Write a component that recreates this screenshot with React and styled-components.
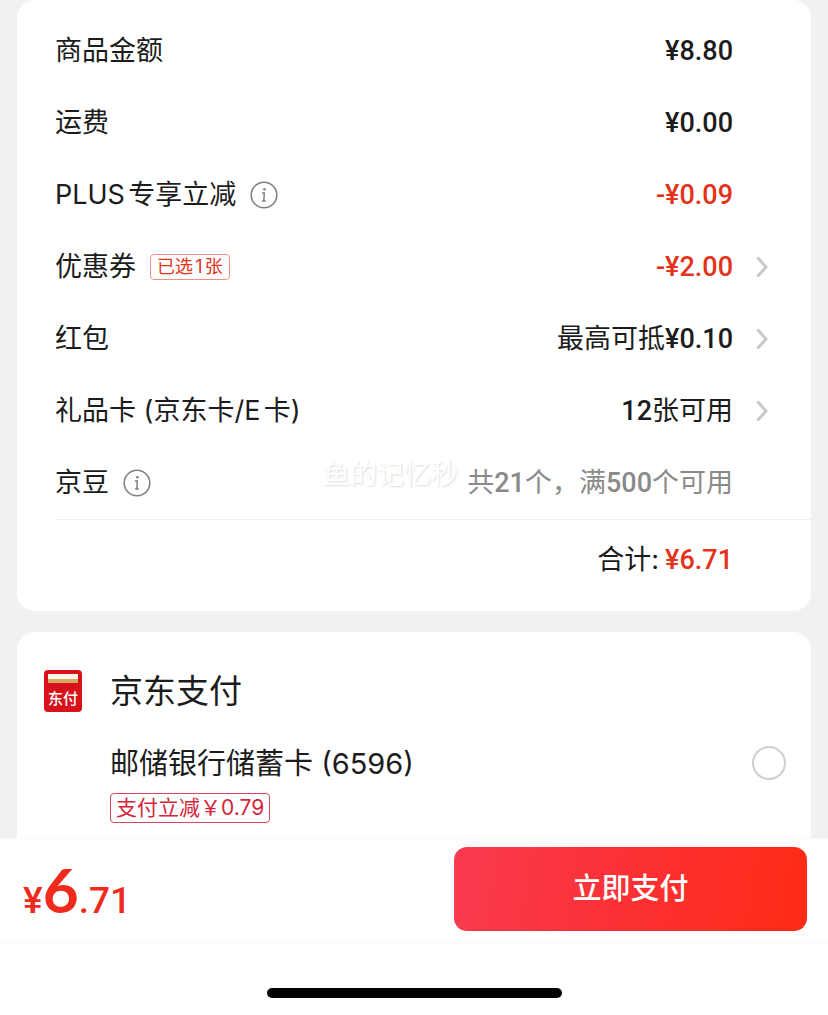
import { useState } from "react";
import styled, { createGlobalStyle } from "styled-components";

const GlobalStyle = createGlobalStyle`
  * {
    box-sizing: border-box;
  }

  body {
    margin: 0;
    background-color: #f1f1f1;
    color: #1c1c1c;
    font-family: Inter, "Noto Sans CJK SC", sans-serif;
    font-size: 27px;
    line-height: 40px;
    text-autospace: no-autospace;
    text-spacing-trim: space-all;
  }

  button {
    font: inherit;
    color: inherit;
    border: none;
    background: none;
    padding: 0;
    cursor: pointer;
  }
`;

const Page = styled.div`
  display: flex;
  flex-direction: column;
  min-height: 100vh;
`;

const Content = styled.main`
  flex: 1;
  display: flex;
  flex-direction: column;
  gap: 21px;
  padding: 0 17px;
`;

const SummaryCard = styled.section`
  position: relative;
  padding: 15px 0 12px;
  background-color: white;
  border-radius: 18px;
`;

const RowList = styled.ul`
  list-style: none;
  margin: 0;
  padding: 0;
`;

const Row = styled.li`
  display: flex;
  align-items: center;
  height: 72px;
  padding: 0 38px;
`;

const Label = styled.span`
  white-space: nowrap;
  text-autospace: normal;
`;

const Value = styled.span`
  margin-left: auto;
  white-space: nowrap;
  color: ${({ $tone }) =>
    $tone === "red" ? "#e4321b" : $tone === "muted" ? "#8a8a8a" : "inherit"};
`;

const Amount = styled.span`
  color: ${({ $tone }) => ($tone === "red" ? "#e4321b" : "inherit")};
  font-family: Roboto, "Noto Sans CJK SC", sans-serif;
  font-weight: 500;
`;

const ArrowSlot = styled.span`
  display: flex;
  justify-content: flex-end;
  width: 40px;
  padding-right: 4px;
`;

const IconButton = styled.button`
  display: flex;
  margin-left: 14px;
`;

const ArrowButton = styled.button`
  display: flex;
`;

const Tag = styled.span`
  margin-left: 14px;
  padding: 0 6px;
  border: 1px solid #ee8f85;
  border-radius: 4px;
  color: #e4321b;
  font-size: 18px;
  line-height: 24px;
  text-autospace: normal;
`;

const TotalRow = styled.div`
  display: flex;
  align-items: center;
  justify-content: flex-end;
  gap: 6px;
  height: 80px;
  margin-left: 38px;
  padding-right: 78px;
  border-top: 1px solid #efefef;
`;

const Watermark = styled.span`
  position: absolute;
  top: 455px;
  left: 306px;
  color: white;
  text-shadow: 1px 1px 2px rgba(0, 0, 0, 0.14);
  pointer-events: none;
`;

const PaymentCard = styled.section`
  flex: 1;
  display: grid;
  grid-template-columns: 38px 1fr auto;
  align-content: start;
  align-items: center;
  column-gap: 28px;
  padding: 36px 25px 14px 27px;
  background-color: white;
  border-radius: 18px 18px 0 0;
`;

const PaymentTitle = styled.h2`
  grid-column: 2 / 4;
  margin: 0;
  font-size: 33px;
  font-weight: 400;
  line-height: 46px;
`;

const CardName = styled.label`
  grid-column: 2;
  margin-top: 30px;
  font-size: 29px;
  line-height: 40px;
`;

const Radio = styled.input`
  appearance: none;
  width: 34px;
  height: 34px;
  margin: 28px 0 0;
  border: 2px solid #cfcfcf;
  border-radius: 50%;
  background-color: white;

  &:checked {
    border: 10px solid #e4321b;
  }
`;

const PromoTag = styled.span`
  grid-column: 2;
  justify-self: start;
  margin-top: 9px;
  padding: 0 5px;
  border: 1px solid #d9465a;
  border-radius: 4px;
  color: #d3263a;
  font-size: 21px;
  line-height: 28px;
`;

const Footer = styled.footer`
  background-color: white;
  border-top: 1px solid #f7f7f7;
`;

const PayBar = styled.div`
  display: flex;
  align-items: center;
  justify-content: space-between;
  padding: 8px 21px 12px 23px;
  border-bottom: 1px solid #fafafa;
`;

const Price = styled.div`
  display: flex;
  align-items: baseline;
  color: #f02a1c;
  font-family: Roboto, sans-serif;
  font-size: 37px;
  font-weight: 500;
  line-height: 40px;
`;

const PriceInteger = styled.span`
  font-family: Lato, sans-serif;
  font-size: 62px;
  font-weight: 700;
  line-height: 84px;
`;

const PayButton = styled.button`
  width: 45%;
  height: 84px;
  border-radius: 13px;
  background-image: linear-gradient(100deg, #f93b50, #fb3033 50%, #ff2b15);
  && {
    color: white;
    font-size: 29px;
    font-weight: 500;
  }
`;

const HomeIndicator = styled.div`
  width: 295px;
  height: 10px;
  margin: 44px auto 17px;
  border-radius: 5px;
  background-color: black;
`;

function InfoIcon() {
  return (
    <svg width="28" height="28" viewBox="0 0 28 28" fill="none">
      <circle cx="14" cy="14" r="12.8" stroke="#808080" strokeWidth="1.6" />
      <circle cx="14.4" cy="8.2" r="1.3" fill="#808080" />
      <path
        d="M12 12h2.3l-.5 8M12 20h3.8"
        stroke="#808080"
        strokeWidth="1.5"
      />
    </svg>
  );
}

function ArrowIcon() {
  return (
    <svg width="14" height="24" viewBox="0 0 14 24" fill="none">
      <path d="M2.5 2.5L11 12L2.5 21.5" stroke="#c8c8c8" strokeWidth="3" />
    </svg>
  );
}

function PayLogo() {
  return (
    <svg width="38" height="42" viewBox="0 0 38 42">
      <rect width="38" height="42" rx="4" fill="#d8121a" />
      <rect x="4" y="4" width="30" height="5" fill="#fff6ec" />
      <rect x="4" y="9" width="30" height="4" fill="#d9a860" />
      <text
        x="19"
        y="34"
        textAnchor="middle"
        fill="white"
        fontSize="15"
        fontWeight="500"
      >
        东付
      </text>
    </svg>
  );
}

const rows = [
  { label: "商品金额", value: <Amount>¥8.80</Amount> },
  { label: "运费", value: <Amount>¥0.00</Amount> },
  {
    label: "PLUS专享立减",
    info: true,
    tone: "red",
    value: <Amount>-¥0.09</Amount>,
  },
  {
    label: "优惠券",
    tag: "已选1张",
    tone: "red",
    arrow: true,
    value: <Amount>-¥2.00</Amount>,
  },
  {
    label: "红包",
    arrow: true,
    value: (
      <>
        最高可抵<Amount>¥0.10</Amount>
      </>
    ),
  },
  {
    label: "礼品卡 (京东卡/E卡)",
    arrow: true,
    value: (
      <>
        <Amount>12</Amount>张可用
      </>
    ),
  },
  {
    label: "京豆",
    info: true,
    tone: "muted",
    value: (
      <>
        共<Amount>21</Amount>个，满<Amount>500</Amount>个可用
      </>
    ),
  },
];

export default function App() {
  const [isSelected, setIsSelected] = useState(false);

  return (
    <Page>
      <GlobalStyle />
      <Content>
        <SummaryCard>
          <RowList>
            {rows.map(({ label, tag, info, tone, arrow, value }) => (
              <Row key={label}>
                <Label>{label}</Label>
                {tag && <Tag>{tag}</Tag>}
                {info && (
                  <IconButton type="button" aria-label={`${label}说明`}>
                    <InfoIcon />
                  </IconButton>
                )}
                <Value $tone={tone}>{value}</Value>
                <ArrowSlot>
                  {arrow && (
                    <ArrowButton type="button" aria-label={label}>
                      <ArrowIcon />
                    </ArrowButton>
                  )}
                </ArrowSlot>
              </Row>
            ))}
          </RowList>
          <TotalRow>
            <span>合计:</span>
            <Amount $tone="red">¥6.71</Amount>
          </TotalRow>
          <Watermark>鱼的记忆秒</Watermark>
        </SummaryCard>

        <PaymentCard>
          <PayLogo />
          <PaymentTitle>京东支付</PaymentTitle>
          <CardName htmlFor="card-6596">邮储银行储蓄卡 (6596)</CardName>
          <Radio
            type="radio"
            id="card-6596"
            name="payment"
            checked={isSelected}
            onChange={() => setIsSelected(true)}
          />
          <PromoTag>支付立减￥0.79</PromoTag>
        </PaymentCard>
      </Content>

      <Footer>
        <PayBar>
          <Price>
            <span>¥</span>
            <PriceInteger>6</PriceInteger>
            <span>.71</span>
          </Price>
          <PayButton type="button">立即支付</PayButton>
        </PayBar>
        <HomeIndicator />
      </Footer>
    </Page>
  );
}
